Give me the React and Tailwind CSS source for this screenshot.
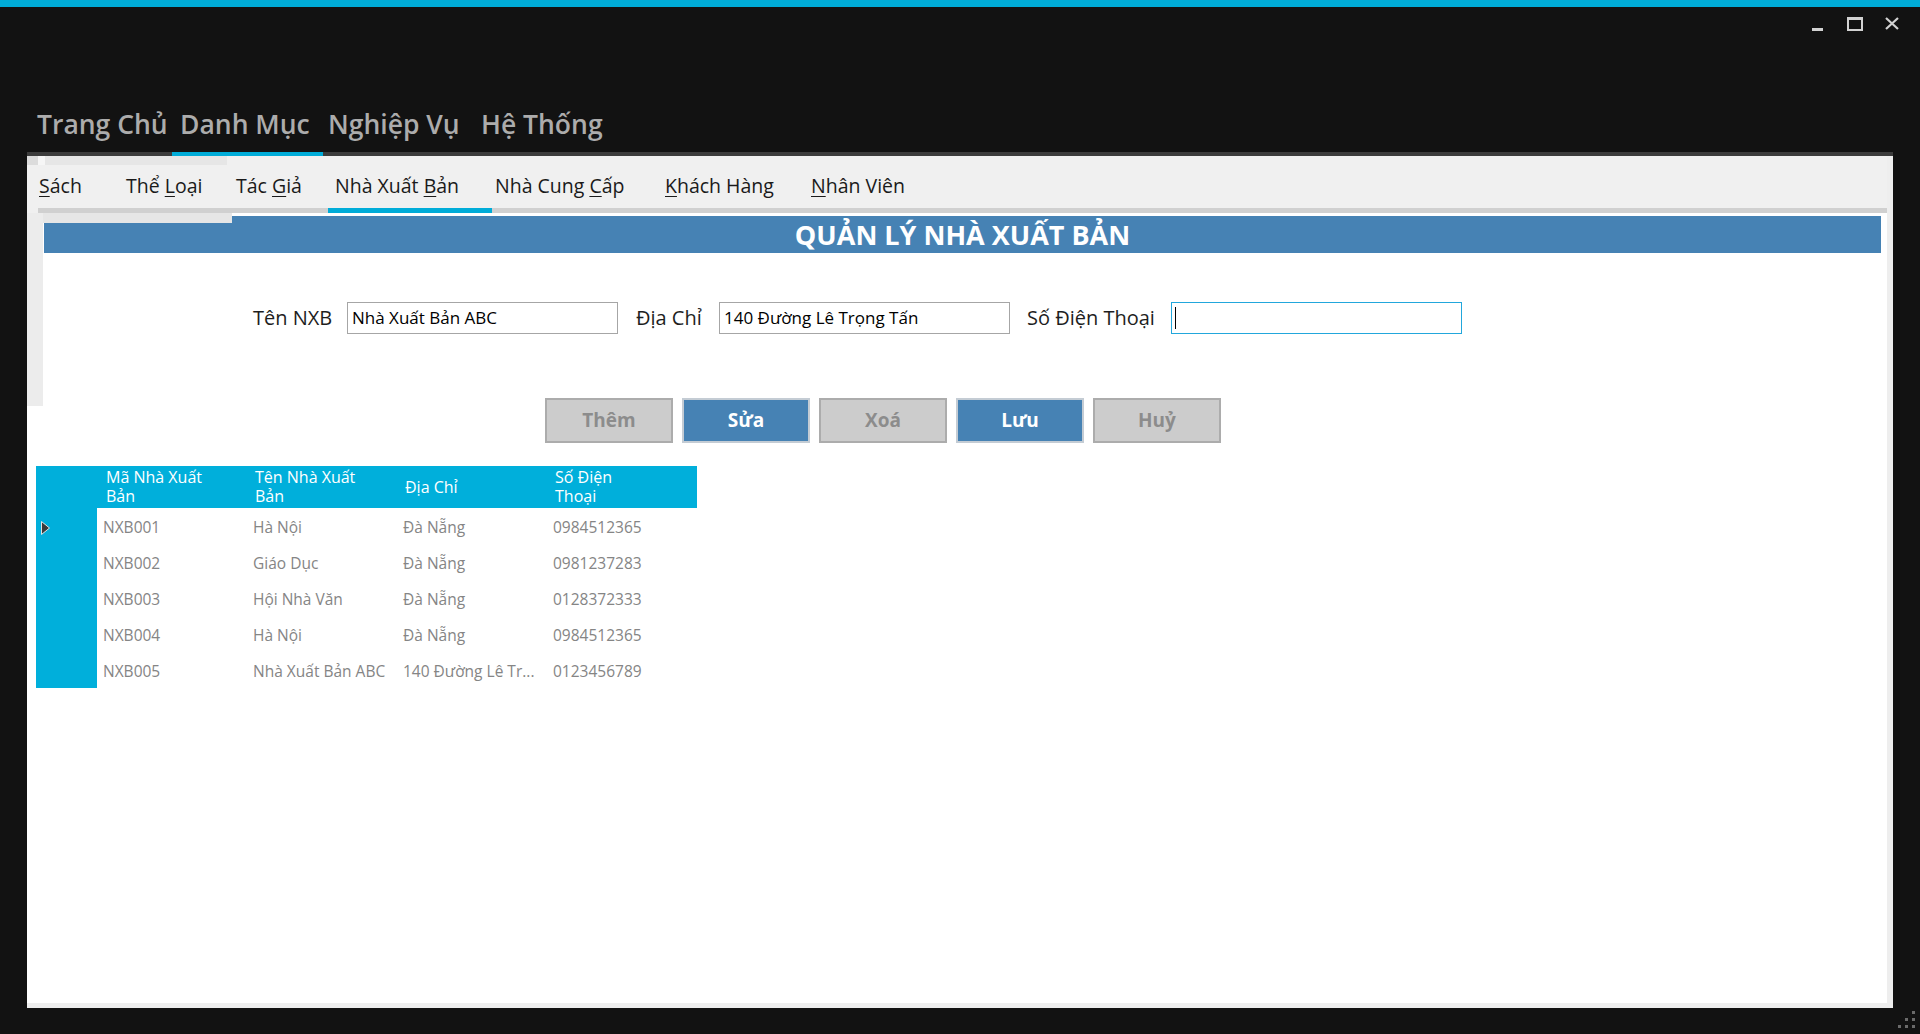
import React from "react";

const FONT = { fontFamily: '"Open Sans", "Noto Sans", sans-serif' };

const menus = [
  { label: "Trang Chủ", w: "w-[143px]", pl: "pl-[8px]" },
  { label: "Danh Mục", w: "w-[151px]", pl: "pl-[8px]", active: true },
  { label: "Nghiệp Vụ", w: "w-[150px]", pl: "pl-[5px]" },
  { label: "Hệ Thống", w: "w-[160px]", pl: "pl-[8px]" },
];

// sub tabs: [before, mnemonic, after], width, left padding
const subTabs = [
  { parts: ["", "S", "ách"], w: "w-[88px]", pl: "pl-[1px]" },
  { parts: ["Thể ", "L", "oại"], w: "w-[110px]", pl: "pl-0" },
  { parts: ["Tác ", "G", "iả"], w: "w-[92px]", pl: "pl-0" },
  { parts: ["Nhà Xuất ", "B", "ản"], w: "w-[164px]", pl: "pl-[7px]", active: true },
  { parts: ["Nhà Cung ", "C", "ấp"], w: "w-[170px]", pl: "pl-[3px]" },
  { parts: ["", "K", "hách Hàng"], w: "w-[146px]", pl: "pl-[3px]" },
  { parts: ["", "N", "hân Viên"], w: "w-[130px]", pl: "pl-[3px]" },
];

const rows = [
  ["NXB001", "Hà Nội", "Đà Nẵng", "0984512365"],
  ["NXB002", "Giáo Dục", "Đà Nẵng", "0981237283"],
  ["NXB003", "Hội Nhà Văn", "Đà Nẵng", "0128372333"],
  ["NXB004", "Hà Nội", "Đà Nẵng", "0984512365"],
  ["NXB005", "Nhà Xuất Bản ABC", "140 Đường Lê Tr...", "0123456789"],
];

const buttons = [
  { label: "Thêm", blue: false },
  { label: "Sửa", blue: true },
  { label: "Xoá", blue: false },
  { label: "Lưu", blue: true },
  { label: "Huỷ", blue: false },
];

function WindowControls() {
  return (
    <div className="flex justify-end items-start pt-[10px] pr-[21px] h-[24px]">
      {/* minimize */}
      <div className="w-[11px] h-[14px] flex items-end">
        <div className="w-[11px] h-[3px] bg-[#d2d2d2]" />
      </div>
      {/* maximize */}
      <div className="ml-[24px] w-[16px] h-[14px] border-2 border-t-[3px] border-[#d2d2d2]" />
      {/* close */}
      <svg className="ml-[22px]" width="14" height="13" viewBox="0 0 14 13">
        <path d="M1 1 L13 12 M13 1 L1 12" stroke="#d2d2d2" strokeWidth="2.2" />
      </svg>
    </div>
  );
}

function RowArrow() {
  return (
    <svg width="11" height="16" viewBox="0 0 11 16">
      <path d="M1.5 1.5 L9.5 8 L1.5 14.5 Z" fill="#3a3a3a" stroke="#e0e0e0" strokeWidth="1" />
    </svg>
  );
}

export default function App() {
  return (
    <div
      className="w-[1920px] h-[1034px] bg-[#121212] relative overflow-hidden flex flex-col"
      style={FONT}
    >
      {/* ── top accent ─────────────────────────────────────────── */}
      <div className="h-[7px] bg-[#00acd8] shrink-0" />

      <WindowControls />

      {/* ── main menu ──────────────────────────────────────────── */}
      <div className="mx-[27px] mt-[75px] flex pl-[2px] border-b-4 border-[#3c3c3c] relative z-10">
        {menus.map((m) => (
          <div
            key={m.label}
            className={`${m.w} ${m.pl} shrink-0 whitespace-nowrap pb-[10px] leading-[36px] text-[26.5px] font-semibold text-[#acacac] -mb-[4px] border-b-4 ${
              m.active ? "border-[#00acd8]" : "border-transparent"
            }`}
          >
            {m.label}
          </div>
        ))}
      </div>

      {/* ── tab panel ──────────────────────────────────────────── */}
      <div className="mx-[27px] h-[852px] bg-white border-r-[6px] border-b-[5px] border-[#eeeeee] flex flex-col">
        {/* sub tab strip */}
        <div className="bg-[#f0f0f0] shrink-0">
          <div className="h-[9px] flex">
            <div className="w-[11px] bg-[#dcdcdc]" />
            <div className="w-[7px] bg-[#f6f6f6]" />
            <div className="w-[182px] bg-[#e6e6e6]" />
          </div>
          <div className="ml-[11px] flex border-b-[5px] border-[#d0d0d0]">
            {subTabs.map((t, i) => (
              <div
                key={i}
                className={`${t.w} ${t.pl} shrink-0 pt-[8px] pb-[9px] leading-[26px] text-[19.5px] text-[#1a1a1a] whitespace-nowrap -mb-[5px] border-b-[5px] ${
                  t.active ? "border-[#00acd8]" : "border-transparent"
                }`}
              >
                {t.parts[0]}
                <span className="underline underline-offset-[3px]">{t.parts[1]}</span>
                {t.parts[2]}
              </div>
            ))}
          </div>
        </div>

        {/* editor section */}
        <div className="flex relative">
          <div className="w-[16px] shrink-0">
            <div className="h-[193px] bg-[#ececec]" />
          </div>
          <div className="flex-1 flex flex-col">
            <div className="mt-[3px] ml-[1px] mr-[6px] h-[37px] bg-[#4682b4] flex items-center justify-center">
              <span className="text-white font-bold text-[27px] leading-none">
                QUẢN LÝ NHÀ XUẤT BẢN
              </span>
            </div>

            {/* form row */}
            <div className="mt-[49px] pl-[210px] flex items-center text-[20px] text-[#1e1e1e]">
              <div className="w-[94px] shrink-0">Tên NXB</div>
              <div className="w-[271px] h-[32px] border border-[#a6a6a6] bg-white flex items-center px-[4px] text-[17px] text-black">
                Nhà Xuất Bản ABC
              </div>
              <div className="w-[83px] shrink-0 ml-[18px]">Địa Chỉ</div>
              <div className="w-[291px] h-[32px] border border-[#a6a6a6] bg-white flex items-center px-[4px] text-[17px] text-black">
                140 Đường Lê Trọng Tấn
              </div>
              <div className="w-[144px] shrink-0 ml-[17px]">Số Điện Thoại</div>
              <div className="w-[291px] h-[32px] border border-[#22a7dc] bg-white flex items-center px-[3px]">
                <div className="w-px h-[22px] bg-black" />
              </div>
            </div>

            {/* actions */}
            <div className="mt-[64px] pl-[502px] flex gap-[9px]">
              {buttons.map((b) => (
                <div
                  key={b.label}
                  className={`w-[128px] h-[45px] border-2 flex items-center justify-center text-[19px] font-bold ${
                    b.blue
                      ? "bg-[#4682b4] border-[#c4ccd4] text-white"
                      : "bg-[#cccccc] border-[#acacac] text-[#8c8c8c]"
                  }`}
                >
                  {b.label}
                </div>
              ))}
            </div>
          </div>
          {/* header overlay patch */}
          <div className="absolute left-[16px] top-0 w-[189px] h-[10px] bg-[#e6e6e6]" />
        </div>

        {/* data grid */}
        <div className="mt-[23px] ml-[9px] w-[661px] flex">
          <div className="w-[61px] bg-[#00afdb] flex flex-col">
            <div className="h-[42px]" />
            <div className="h-[36px] flex items-center pl-[4px] pt-[3px]">
              <RowArrow />
            </div>
          </div>
          <div className="w-[600px] flex flex-col">
            <div className="h-[42px] bg-[#00afdb] grid grid-cols-4 items-center text-white text-[16px] leading-[19px]">
              <div className="pl-[9px]">Mã Nhà Xuất<br />Bản</div>
              <div className="pl-[8px]">Tên Nhà Xuất<br />Bản</div>
              <div className="pl-[8px]">Địa Chỉ</div>
              <div className="pl-[8px]">Số Điện<br />Thoại</div>
            </div>
            {rows.map((r) => (
              <div key={r[0]} className="h-[36px] pt-[4px] grid grid-cols-4 items-center text-[15.5px] text-[#858585] whitespace-nowrap">
                {r.map((c, i) => (
                  <div key={i} className="pl-[6px] overflow-hidden">
                    {c}
                  </div>
                ))}
              </div>
            ))}
          </div>
        </div>
      </div>

      {/* ── resize grip ───────────────────────────────────────── */}
      <div className="absolute right-[5px] bottom-[6px] grid grid-cols-3 gap-[4px]">
        <span className="w-[3px] h-[3px]" />
        <span className="w-[3px] h-[3px]" />
        <span className="w-[3px] h-[3px] bg-[#6a6a6a]" />
        <span className="w-[3px] h-[3px]" />
        <span className="w-[3px] h-[3px] bg-[#6a6a6a]" />
        <span className="w-[3px] h-[3px] bg-[#6a6a6a]" />
        <span className="w-[3px] h-[3px] bg-[#6a6a6a]" />
        <span className="w-[3px] h-[3px] bg-[#6a6a6a]" />
        <span className="w-[3px] h-[3px] bg-[#6a6a6a]" />
      </div>
    </div>
  );
}
